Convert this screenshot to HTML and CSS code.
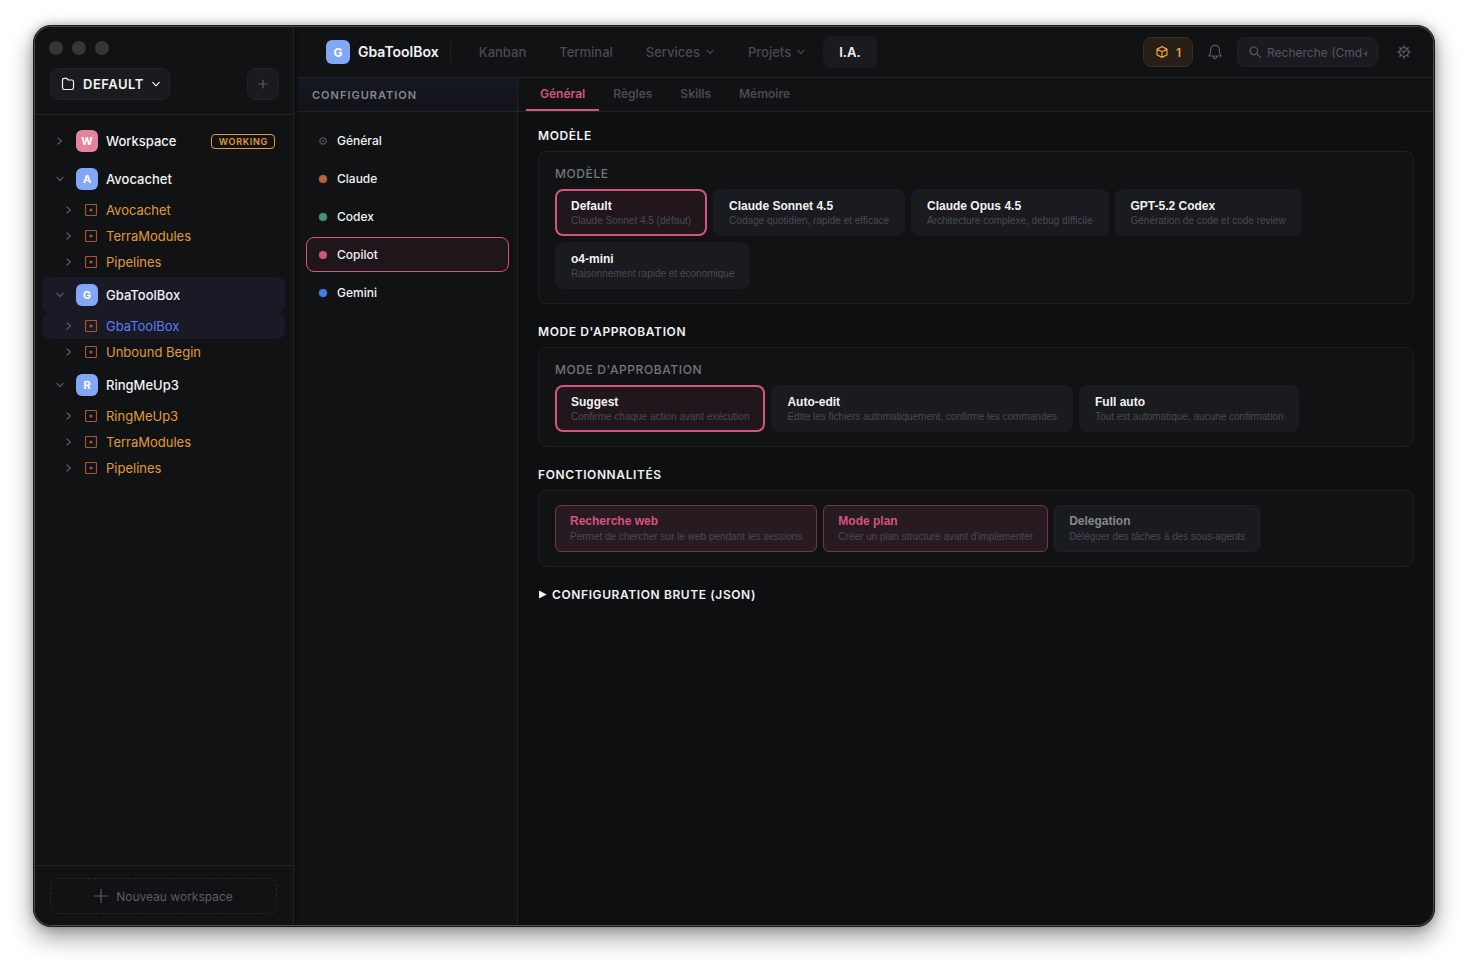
FILE: index.html
```html
<!DOCTYPE html>
<html lang="fr">
<head>
  <meta charset="UTF-8" />
  <meta name="viewport" content="width=device-width, initial-scale=1.0" />
  <title>GbaToolBox</title>
  <link rel="stylesheet" href="styles.css">
</head>
<body>
  <!-- Icônes partagées -->
  <svg class="sprite" aria-hidden="true">
    <symbol id="chevron" viewBox="0 0 10 10"><path d="M3 2 6.4 5 3 8" /></symbol>
    <symbol id="chevron-down" viewBox="0 0 10 10"><path d="M2 3.3 5 6.6 8 3.3" /></symbol>
    <symbol id="repo" viewBox="0 0 12 12"><rect x="0.5" y="0.5" width="11" height="11" rx="1.2" /><circle cx="6" cy="6" r="1.6" fill="currentColor" stroke="none" /></symbol>
  </svg>

  <div class="window">
    <!-- Barre latérale -->
    <aside class="sidebar">
      <div class="lights"><span></span><span></span><span></span></div>
      <div class="sidebar-top">
        <button class="group-btn">
          <svg class="icon" width="14" height="14" viewBox="0 0 14 14"><path d="M1.5 3V10.8Q1.5 12.5 3.2 12.5H10.8Q12.5 12.5 12.5 10.8V4.8Q12.5 3 10.8 3H7.2L5.8 1.3H3.2Q1.5 1.3 1.5 3Z" /></svg>
          DEFAULT
          <svg class="icon" width="8" height="8" viewBox="0 0 8 8"><path d="M0.8 2.4 4 5.8 7.2 2.4" /></svg>
        </button>
        <button class="add-btn" aria-label="Ajouter"><svg class="icon" width="10" height="10" viewBox="0 0 10 10"><path d="M5 1V9M1 5H9" /></svg></button>
      </div>

      <nav class="tree">
        <a href="#" class="workspace"><svg class="icon" width="10" height="10"><use href="#chevron" /></svg><span class="avatar pink">W</span>Workspace<span class="status">WORKING</span></a>

        <a href="#" class="workspace"><svg class="icon" width="10" height="10"><use href="#chevron-down" /></svg><span class="avatar">A</span>Avocachet</a>
        <div class="repos">
          <a href="#" class="repo"><svg class="icon" width="10" height="10"><use href="#chevron" /></svg><svg class="icon repo-icon" width="12" height="12"><use href="#repo" /></svg>Avocachet</a>
          <a href="#" class="repo"><svg class="icon" width="10" height="10"><use href="#chevron" /></svg><svg class="icon repo-icon" width="12" height="12"><use href="#repo" /></svg>TerraModules</a>
          <a href="#" class="repo"><svg class="icon" width="10" height="10"><use href="#chevron" /></svg><svg class="icon repo-icon" width="12" height="12"><use href="#repo" /></svg>Pipelines</a>
        </div>

        <a href="#" class="workspace active"><svg class="icon" width="10" height="10"><use href="#chevron-down" /></svg><span class="avatar">G</span>GbaToolBox</a>
        <div class="repos">
          <a href="#" class="repo active"><svg class="icon" width="10" height="10"><use href="#chevron" /></svg><svg class="icon repo-icon" width="12" height="12"><use href="#repo" /></svg>GbaToolBox</a>
          <a href="#" class="repo"><svg class="icon" width="10" height="10"><use href="#chevron" /></svg><svg class="icon repo-icon" width="12" height="12"><use href="#repo" /></svg>Unbound Begin</a>
        </div>

        <a href="#" class="workspace"><svg class="icon" width="10" height="10"><use href="#chevron-down" /></svg><span class="avatar">R</span>RingMeUp3</a>
        <div class="repos">
          <a href="#" class="repo"><svg class="icon" width="10" height="10"><use href="#chevron" /></svg><svg class="icon repo-icon" width="12" height="12"><use href="#repo" /></svg>RingMeUp3</a>
          <a href="#" class="repo"><svg class="icon" width="10" height="10"><use href="#chevron" /></svg><svg class="icon repo-icon" width="12" height="12"><use href="#repo" /></svg>TerraModules</a>
          <a href="#" class="repo"><svg class="icon" width="10" height="10"><use href="#chevron" /></svg><svg class="icon repo-icon" width="12" height="12"><use href="#repo" /></svg>Pipelines</a>
        </div>
      </nav>

      <div class="sidebar-bottom">
        <button class="new-btn"><svg class="icon" width="14" height="14" viewBox="0 0 14 14"><path d="M7 0.5V13.5M0.5 7H13.5" /></svg>Nouveau workspace</button>
      </div>
    </aside>

    <main class="main">
      <!-- En-tête -->
      <header class="header">
        <span class="avatar logo">G</span>
        <span class="app-name">GbaToolBox</span>
        <nav class="menu">
          <button>Kanban</button>
          <button>Terminal</button>
          <button>Services<svg class="icon" width="10" height="10"><use href="#chevron-down" /></svg></button>
          <button>Projets<svg class="icon" width="10" height="10"><use href="#chevron-down" /></svg></button>
          <button class="active">I.A.</button>
        </nav>
        <div class="tools">
          <button class="box-btn"><svg class="icon" width="14" height="14" viewBox="0 0 14 14"><path d="M7 1.6 12 4.1V9.9L7 12.4 2 9.9V4.1ZM2 4.1 7 6.8 12 4.1M7 6.8V12.4" /></svg>1</button>
          <button class="bell-btn" aria-label="Notifications"><svg class="icon" width="16" height="16" viewBox="0 0 16 16"><path d="M1.8 12H14.2C12.8 10.8 12.4 9.6 12.4 7V5.8C12.4 3.2 10.5 1.3 8 1.3S3.6 3.2 3.6 5.8V7C3.6 9.6 3.2 10.8 1.8 12ZM6.3 12.3C6.4 15.3 9.6 15.3 9.7 12.3" /></svg></button>
          <label class="search">
            <svg class="icon" width="12" height="12" viewBox="0 0 12 12"><circle cx="4.8" cy="4.8" r="3.8" /><path d="M7.7 7.7 11.3 11.3" /></svg>
            <input type="text" placeholder="Recherche (Cmd+K)" aria-label="Recherche">
          </label>
          <button class="gear-btn" aria-label="Paramètres"><svg class="icon" width="14" height="14" viewBox="0 0 14 14"><circle cx="7" cy="7" r="4.4" /><path d="M7 2.6V1M7 13V11.4M2.6 7H1M13 7H11.4M3.9 3.9 2.8 2.8M11.2 11.2 10.1 10.1M3.9 10.1 2.8 11.2M11.2 2.8 10.1 3.9" stroke-width="1.5" /><path d="M6 8.2 9.2 5M5 5.6 6.4 7" /></svg></button>
        </div>
      </header>

      <div class="body">
        <section class="config">
          <h2>CONFIGURATION</h2>
          <div class="agents">
            <button><svg class="gear" width="8" height="8" viewBox="0 0 8 8"><circle cx="4" cy="4" r="3.1" /><circle cx="4" cy="4" r="3.7" stroke-dasharray="1.3 1.6" stroke-width="0.8" /><circle cx="4" cy="4" r="0.9" fill="currentColor" stroke="none" /></svg>Général</button>
            <button><span class="dot claude"></span>Claude</button>
            <button><span class="dot codex"></span>Codex</button>
            <button class="active"><span class="dot copilot"></span>Copilot</button>
            <button><span class="dot gemini"></span>Gemini</button>
          </div>
        </section>

        <section class="content">
          <div class="tabs">
            <button class="active">Général</button>
            <button>Règles</button>
            <button>Skills</button>
            <button>Mémoire</button>
          </div>

          <div class="panel">
            <h3>MODÈLE</h3>
            <div class="box">
              <h4>MODÈLE</h4>
              <div class="cards">
                <button class="card selected"><b>Default</b><span>Claude Sonnet 4.5 (défaut)</span></button>
                <button class="card"><b>Claude Sonnet 4.5</b><span>Codage quotidien, rapide et efficace</span></button>
                <button class="card"><b>Claude Opus 4.5</b><span>Architecture complexe, debug difficile</span></button>
                <button class="card"><b>GPT-5.2 Codex</b><span>Génération de code et code review</span></button>
                <button class="card"><b>o4-mini</b><span>Raisonnement rapide et économique</span></button>
              </div>
            </div>

            <h3>MODE D'APPROBATION</h3>
            <div class="box">
              <h4>MODE D'APPROBATION</h4>
              <div class="cards">
                <button class="card selected"><b>Suggest</b><span>Confirme chaque action avant exécution</span></button>
                <button class="card"><b>Auto-edit</b><span>Edite les fichiers automatiquement, confirme les commandes</span></button>
                <button class="card"><b>Full auto</b><span>Tout est automatique, aucune confirmation</span></button>
              </div>
            </div>

            <h3>FONCTIONNALITÉS</h3>
            <div class="box">
              <div class="cards">
                <button class="card feature on"><b>Recherche web</b><span>Permet de chercher sur le web pendant les sessions</span></button>
                <button class="card feature on"><b>Mode plan</b><span>Créer un plan structure avant d'implementer</span></button>
                <button class="card feature"><b>Delegation</b><span>Déléguer des tâches à des sous-agents</span></button>
              </div>
            </div>

            <button class="raw"><svg width="9" height="9" viewBox="0 0 9 9"><path d="M1 0.5 8.7 4.5 1 8.5Z" fill="currentColor" /></svg>CONFIGURATION BRUTE (JSON)</button>
          </div>
        </section>
      </div>
    </main>
  </div>
</body>
</html>
```
FILE: styles.css
```css
* {
  margin: 0;
  padding: 0;
  box-sizing: border-box;
}
body {
  min-height: 100vh;
  display: flex;
  padding: 25px 33px 41px;
  background: white;
  font-family: Inter, sans-serif;
  font-size: 13px;
  color: #f2f2f4;
}
button, input {
  font: inherit;
  color: inherit;
  background: none;
  border: none;
}
button {
  cursor: pointer;
}
a {
  color: inherit;
  text-decoration: none;
}
.sprite {
  position: absolute;
  width: 0;
  height: 0;
}
.icon {
  flex: none;
  fill: none;
  stroke: currentColor;
  stroke-width: 1.2;
  stroke-linecap: round;
  stroke-linejoin: round;
}
.window {
  flex: 1;
  display: flex;
  border: 1px solid #1b1b1c;
  border-radius: 18px;
  overflow: hidden;
  background: #0e0f11;
  box-shadow: inset 0 0 0 1px #4a4b4c, 0 10px 24px rgba(0, 0, 0, 0.4), 0 0 10px rgba(0, 0, 0, 0.25);
}

/* Barre latérale */
.sidebar {
  width: 259px;
  flex: none;
  display: flex;
  flex-direction: column;
  margin: 1px 0 1px 1px;
  border-right: 1px solid #222327;
  border-radius: 17px 0 0 17px;
  background: #111214;
}
.lights {
  display: flex;
  gap: 9px;
  padding: 14px 14px 0;
}
.lights span {
  width: 14px;
  height: 14px;
  border-radius: 50%;
  background: #363638;
}
.sidebar-top {
  display: flex;
  justify-content: space-between;
  padding: 13px 14px 14px 15px;
  border-bottom: 1px solid #222327;
}
.group-btn, .add-btn {
  height: 32px;
  display: flex;
  align-items: center;
  border: 1px solid #202125;
  border-radius: 8px;
  background: #1a1b1f;
}
.group-btn {
  gap: 8px;
  padding: 0 9px 0 10px;
  font-weight: 600;
  letter-spacing: 0.04em;
}
.add-btn {
  width: 32px;
  justify-content: center;
  color: #5a5c66;
}
.tree {
  flex: 1;
  padding: 8px 8px 0 7px;
}
.workspace, .repo {
  display: flex;
  align-items: center;
  border-radius: 8px;
}
.workspace {
  height: 36px;
  padding: 0 10px 0 13px;
  font-weight: 500;
}
.workspace .icon, .repo .icon {
  color: #5a5c66;
}
.repos {
  margin-bottom: 2px;
}
.workspace:first-child {
  margin-bottom: 2px;
}
.repo {
  height: 26px;
  padding-left: 22px;
  color: #e09a38;
}
.repo .repo-icon {
  margin: 0 9px 0 11px;
  color: #a95636;
}
.workspace.active, .repo.active {
  background: #191a26;
}
.repo.active {
  color: #5b7cf5;
}
.avatar {
  width: 22px;
  height: 22px;
  flex: none;
  display: flex;
  align-items: center;
  justify-content: center;
  margin: 0 8px 0 11px;
  border-radius: 6px;
  background: #82a7f7;
  color: white;
  font-size: 11px;
  font-weight: 700;
}
.avatar.pink {
  background: #e5829d;
}
.status {
  margin-left: auto;
  padding: 0 6px 0 7px;
  border: 1px solid #e09a38;
  border-radius: 4px;
  color: #e09a38;
  font-size: 9px;
  line-height: 13px;
  font-weight: 600;
  letter-spacing: 0.08em;
}
.sidebar-bottom {
  padding: 12px 16px 11px 15px;
  border-top: 1px solid #222327;
}
.new-btn {
  width: 100%;
  height: 36px;
  display: flex;
  align-items: center;
  justify-content: center;
  gap: 8px;
  border: 1px dashed #26272b;
  border-radius: 8px;
  color: #5a5c66;
  font-size: 12px;
}

/* En-tête */
.main {
  flex: 1;
  min-width: 0;
  display: flex;
  flex-direction: column;
  margin: 1px 1px 1px 4px;
  border-radius: 0 17px 17px 0;
  overflow: hidden;
}
.header {
  height: 51px;
  flex: none;
  display: flex;
  align-items: center;
  padding: 0 22px 0 28px;
  border-bottom: 1px solid #222327;
  background: #111214;
}
.avatar.logo {
  width: 24px;
  height: 24px;
  margin: 0 8px 0 0;
  font-size: 12px;
}
.app-name {
  padding-right: 11px;
  border-right: 1px solid #222327;
  font-size: 14px;
  line-height: 20px;
  font-weight: 600;
}
.menu {
  display: flex;
  gap: 1px;
  margin-left: 12px;
}
.menu button {
  height: 32px;
  display: flex;
  align-items: center;
  gap: 5px;
  padding: 0 16px;
  border-radius: 8px;
  color: #484a53;
  font-weight: 500;
  white-space: nowrap;
}
.menu button.active {
  background: #1a1b1f;
  color: #f2f2f4;
  font-weight: 600;
}
.tools {
  display: flex;
  align-items: center;
  margin-left: auto;
  color: #5a5c66;
}
.box-btn {
  height: 30px;
  display: flex;
  align-items: center;
  gap: 7px;
  padding: 0 11px;
  border: 1px solid #3a2d1b;
  border-radius: 8px;
  background: #261f17;
  color: #e8a03a;
  font-size: 12px;
  font-weight: 600;
}
.bell-btn, .gear-btn {
  display: flex;
}
.bell-btn {
  margin: 0 14px;
}
.search {
  width: 141px;
  height: 30px;
  display: flex;
  align-items: center;
  gap: 6px;
  margin-right: 19px;
  padding: 0 10px 0 11px;
  border: 1px solid #202125;
  border-radius: 8px;
  background: #1a1b1f;
}
.search input {
  flex: 1;
  min-width: 0;
  font-size: 12px;
  outline: none;
}
.search input::placeholder {
  color: #54565f;
}

/* Liste des agents */
.body {
  flex: 1;
  display: flex;
}
.config {
  width: 220px;
  flex: none;
  border-right: 1px solid #222327;
  background: #111214;
}
.config h2 {
  height: 34px;
  padding-left: 14px;
  border-bottom: 1px solid #222327;
  background: linear-gradient(#151824, #121316);
  color: #85878f;
  font-size: 11px;
  line-height: 34px;
  font-weight: 600;
  letter-spacing: 1px;
}
.agents {
  display: flex;
  flex-direction: column;
  gap: 3px;
  padding: 11px 8px;
}
.agents button {
  height: 35px;
  display: flex;
  align-items: center;
  gap: 10px;
  padding: 0 12px;
  border: 1px solid transparent;
  border-radius: 8px;
  font-size: 12px;
  font-weight: 500;
}
.agents button.active {
  border-color: #d4547f;
  background: #1f161b;
}
.gear {
  fill: none;
  stroke: #5a5c66;
  color: #5a5c66;
}
.dot {
  width: 8px;
  height: 8px;
  border-radius: 50%;
  box-shadow: 0 0 0 1px #1d1e21;
}
.claude { background: #b8603c; }
.codex { background: #40967a; }
.copilot { background: #d4547f; }
.gemini { background: #4478ee; }

/* Contenu */
.content {
  flex: 1;
  min-width: 0;
}
.tabs {
  height: 34px;
  display: flex;
  padding-left: 8px;
  border-bottom: 1px solid #222327;
  background: #111214;
}
.tabs button {
  padding: 0 14px;
  border-bottom: 2px solid transparent;
  color: #484a53;
  font-size: 12px;
  font-weight: 600;
}
.tabs button.active {
  border-color: #d4547f;
  color: #d4547f;
}
.panel {
  padding: 16px 19px 16px 20px;
}
h3, h4, .raw {
  font-size: 12px;
  line-height: 15px;
  letter-spacing: 0.05em;
}
h3, .raw {
  font-weight: 600;
}
h3, h4 {
  margin-bottom: 8px;
}
h4 {
  color: #74767f;
  font-weight: 500;
}
.box {
  margin-bottom: 20px;
  padding: 14px 16px;
  border: 1px solid #1e1f22;
  border-radius: 8px;
  background: #111214;
}
.cards {
  display: flex;
  flex-wrap: wrap;
  gap: 6px;
}
.card {
  display: flex;
  flex-direction: column;
  gap: 2px;
  padding: 8px 14px;
  border: 2px solid #1a1b1f;
  border-radius: 8px;
  background: #1a1b1f;
  font-family: "Liberation Sans", Arial, sans-serif;
  text-align: left;
}
.card b {
  font-size: 12px;
  line-height: 14px;
}
.card span {
  color: #484a53;
  font-size: 10px;
  line-height: 11px;
}
.card.selected {
  border-color: #d4547f;
  background: #20161b;
}
.card.feature {
  gap: 3px;
  padding-bottom: 9px;
  border: 1px solid #202125;
  border-radius: 6px;
}
.feature b {
  color: #85878f;
}
.card.feature.on {
  border-color: #78334b;
  background: #281a21;
}
.on b {
  color: #d4547f;
}
.raw {
  display: flex;
  align-items: center;
  gap: 5px;
}
```
